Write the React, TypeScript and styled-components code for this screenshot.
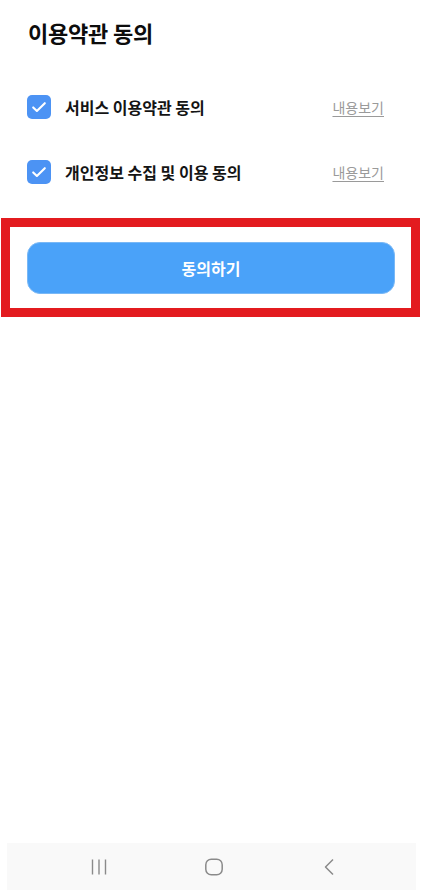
import styled, { createGlobalStyle } from "styled-components"

const GlobalStyle = createGlobalStyle`
  html, body {
    margin: 0;
    padding: 0;
    background: #ffffff;
  }
  body {
    font-family: "Noto Sans CJK KR", "Noto Sans", sans-serif;
    color: #111111;
  }
`

const terms = [
  { id: 'service', label: '서비스 이용약관 동의' },
  { id: 'privacy', label: '개인정보 수집 및 이용 동의' },
]

function CheckIcon() {
  return (
    <svg width="18" height="18" viewBox="0 0 18 18" fill="none">
      <path d="M3.2 9.4l3.7 3.6L14.8 5.2" stroke="#ffffff" strokeWidth="2.1" strokeLinecap="round" strokeLinejoin="round" />
    </svg>
  )
}

export default function App() {
  return (
    <Screen>
      <GlobalStyle />
      <Content>
        <Title>이용약관 동의</Title>
        <TermList>
          {terms.map((term) => (
            <TermRow key={term.id}>
              <CheckBox>
                <CheckIcon />
              </CheckBox>
              <TermLabel>{term.label}</TermLabel>
              <ViewLink>내용보기</ViewLink>
            </TermRow>
          ))}
        </TermList>
        <Highlight>
          <AgreeButton>동의하기</AgreeButton>
        </Highlight>
      </Content>
      <NavBar>
        <NavItem>
          <svg width="18" height="18" viewBox="0 0 18 18" fill="none">
            <path d="M2.5 1.5v15M9 1.5v15M15.5 1.5v15" stroke="#8a8a8a" strokeWidth="1.4" />
          </svg>
        </NavItem>
        <NavItem>
          <svg width="20" height="20" viewBox="0 0 20 20" fill="none">
            <rect x="1.8" y="2.2" width="16.4" height="15.6" rx="5.5" stroke="#8a8a8a" strokeWidth="1.5" />
          </svg>
        </NavItem>
        <NavItem>
          <svg width="14" height="20" viewBox="0 0 14 20" fill="none">
            <path d="M11 2.5L3.5 10l7.5 7.5" stroke="#8a8a8a" strokeWidth="1.5" strokeLinejoin="round" />
          </svg>
        </NavItem>
      </NavBar>
    </Screen>
  )
}

const Screen = styled.div`
  width: 421px;
  height: 895px;
  display: flex;
  flex-direction: column;
  background: #ffffff;
  overflow: hidden;
`

const Content = styled.main`
  flex: 1;
  display: flex;
  flex-direction: column;
  padding-top: 17px;
`

const Title = styled.h1`
  margin: 0 0 0 28px;
  font-size: 22px;
  line-height: 30px;
  font-weight: 700;
  color: #0c0c0c;
  letter-spacing: -0.2px;
`

const TermList = styled.ul`
  list-style: none;
  margin: 48px 0 0;
  padding: 0;
  display: flex;
  flex-direction: column;
  gap: 41px;
`

const TermRow = styled.li`
  height: 24px;
  display: flex;
  align-items: center;
  padding: 0 37px 0 27px;
`

const CheckBox = styled.span`
  width: 24px;
  height: 24px;
  border-radius: 5px;
  background: #4c93f4;
  display: flex;
  align-items: center;
  justify-content: center;
  flex-shrink: 0;
`

const TermLabel = styled.span`
  flex: 1;
  margin-left: 14px;
  font-size: 16px;
  font-weight: 700;
  color: #141414;
`

const ViewLink = styled.a`
  font-size: 14px;
  color: #9a9a9a;
  text-decoration: underline;
  text-underline-offset: 3px;
  cursor: pointer;
`

const Highlight = styled.div`
  margin: 34px 1px 0 1px;
  border: 9px solid #e31b1f;
  padding: 15px 16px 14px 17px;
`

const AgreeButton = styled.button`
  width: 100%;
  height: 52px;
  border: 1px solid #79b8f6;
  border-radius: 13px;
  background: #4aa2f9;
  color: #ffffff;
  font-family: "Noto Sans CJK KR", "Noto Sans", sans-serif;
  font-size: 16px;
  font-weight: 700;
  display: flex;
  align-items: center;
  justify-content: center;
`

const NavBar = styled.nav`
  height: 47px;
  margin: 0 5px 5px 7px;
  background: #f9f9f9;
  display: grid;
  grid-template-columns: repeat(3, 1fr);
  align-items: center;
  padding: 0 30px 0 34px;
`

const NavItem = styled.div`
  display: flex;
  justify-content: center;
  align-items: center;
`
